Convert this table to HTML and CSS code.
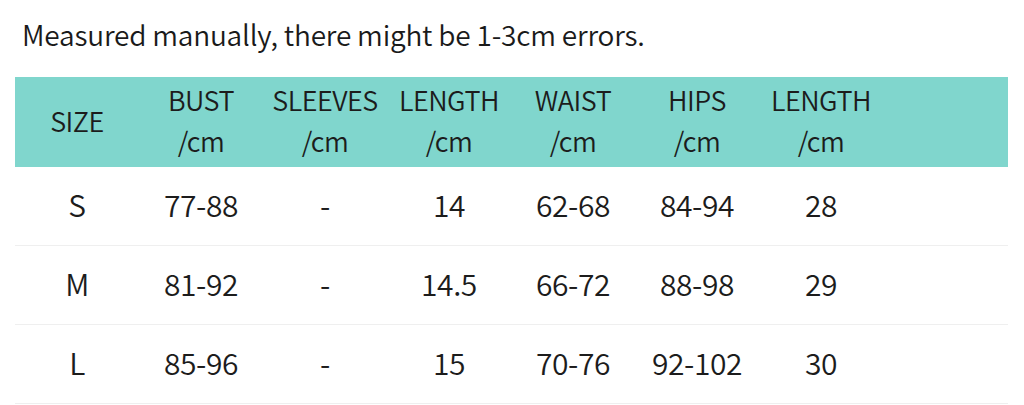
FILE: index.html
```html
<!DOCTYPE html>
<html>
<head>
<meta charset="utf-8">
<link rel="stylesheet" href="styles.css">
</head>
<body>
<div class="page">
  <p class="note">Measured manually, there might be 1-3cm errors.</p>
  <div class="table">
    <div class="row head">
      <div class="cell">SIZE</div>
      <div class="cell">BUST<br>/cm</div>
      <div class="cell">SLEEVES<br>/cm</div>
      <div class="cell">LENGTH<br>/cm</div>
      <div class="cell">WAIST<br>/cm</div>
      <div class="cell">HIPS<br>/cm</div>
      <div class="cell">LENGTH<br>/cm</div>
      <div class="cell"></div>
    </div>
    <div class="row">
      <div class="cell">S</div>
      <div class="cell">77-88</div>
      <div class="cell">-</div>
      <div class="cell">14</div>
      <div class="cell">62-68</div>
      <div class="cell">84-94</div>
      <div class="cell">28</div>
      <div class="cell"></div>
    </div>
    <div class="row">
      <div class="cell">M</div>
      <div class="cell">81-92</div>
      <div class="cell">-</div>
      <div class="cell">14.5</div>
      <div class="cell">66-72</div>
      <div class="cell">88-98</div>
      <div class="cell">29</div>
      <div class="cell"></div>
    </div>
    <div class="row">
      <div class="cell">L</div>
      <div class="cell">85-96</div>
      <div class="cell">-</div>
      <div class="cell">15</div>
      <div class="cell">70-76</div>
      <div class="cell">92-102</div>
      <div class="cell">30</div>
      <div class="cell"></div>
    </div>
  </div>
</div>
</body>
</html>
```
FILE: styles.css
```css
html, body {
  margin: 0;
  padding: 0;
  background: #ffffff;
}
body {
  font-family: "Noto Sans CJK SC", "Noto Sans", sans-serif;
  font-weight: 350;
  color: #1c1c1c;
}
.page {
  width: 1024px;
  height: 405px;
  overflow: hidden;
  padding-left: 15px;
  box-sizing: border-box;
}
.note {
  margin: 0;
  height: 77px;
  padding-left: 7px;
  font-size: 28px;
  line-height: 68px;
  letter-spacing: -0.2px;
  color: #1a1a1a;
}
.table {
  width: 993px;
}
.row {
  display: grid;
  grid-template-columns: repeat(8, 124px);
  height: 79px;
  border-bottom: 1px solid #efefef;
  box-sizing: border-box;
  align-items: center;
}
.row.head {
  height: 90px;
  background: #80d6cd;
  border-bottom: none;
}
.cell {
  text-align: center;
  font-size: 30px;
  line-height: 41px;
  letter-spacing: -0.4px;
  padding-bottom: 4px;
}
.head .cell {
  font-size: 27px;
  letter-spacing: -0.5px;
}
```
